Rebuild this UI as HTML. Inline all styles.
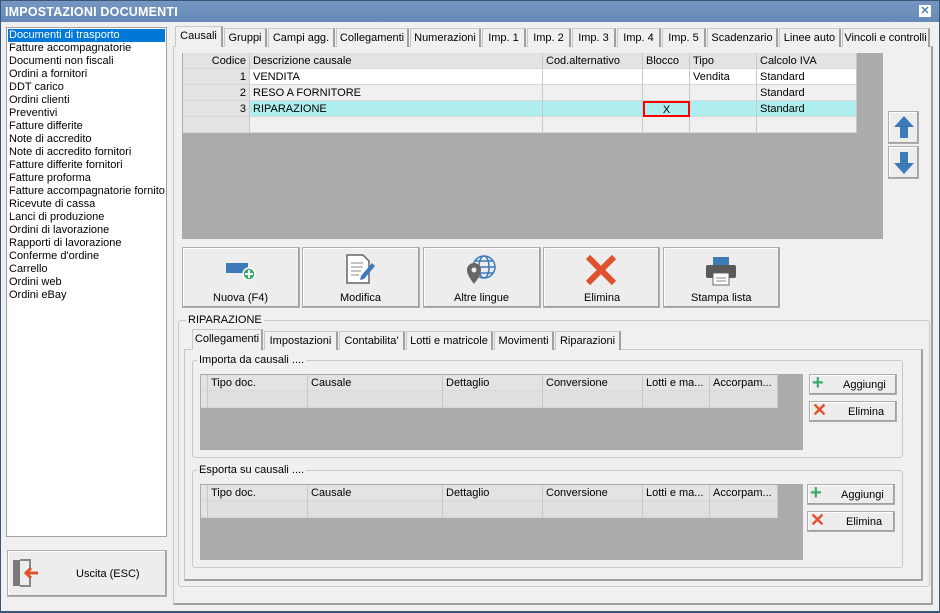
<!DOCTYPE html><html><head><meta charset="utf-8"><style>
*{box-sizing:border-box;margin:0;padding:0}
body{width:940px;height:613px;overflow:hidden;background:#f0f0f0;font:11px "Liberation Sans",sans-serif;color:#000;position:relative}
.a{position:absolute}
.t{position:absolute;white-space:nowrap}
.btn{position:absolute;background:#ededed;border:1px solid #adadad;box-shadow:inset -1px -1px 0 #a0a0a0,inset 1px 1px 0 #fff}
.tab{position:absolute;height:19px;border:1px solid #c8c8c8;border-bottom:none;border-right:2px solid #a0a0a0;background:#f0f0f0;padding:3px 0 0;text-align:center;font-size:11px}
.cell{position:absolute;border-right:1px solid #c8c8c8;border-bottom:1px solid #d8d8d8;padding:2px 3px;white-space:nowrap;overflow:hidden}
.grp{position:absolute;border:1px solid #c8c8c8;border-radius:3px}
.lbl{position:absolute;background:#f0f0f0;padding:0 2px;white-space:nowrap}
</style></head><body>
<!-- frame -->
<div class="a" style="left:0;top:0;width:940px;height:613px;border:1px solid #3b5675;border-bottom:2px solid #3b5675"></div>
<div class="a" style="left:1px;top:1px;width:938px;height:21px;background:linear-gradient(#7596c0,#6589b8)"></div>
<div class="t" style="left:5px;top:5px;color:#fff;font-weight:bold;font-size:12.5px;letter-spacing:0.2px">IMPOSTAZIONI DOCUMENTI</div>
<div class="a" style="left:919px;top:5px;width:12px;height:12px;background:#fff;color:#5a7eb0;font:bold 11px/12px 'Liberation Sans';text-align:center">✕</div>

<!-- left list -->
<div class="a" style="left:6px;top:27px;width:161px;height:510px;background:#fff;border:1px solid #a0a0a0"></div>
<div class="a" style="left:8px;top:29px;width:157px;height:13px;background:#0078d7"></div>
<div class="a" style="left:9px;top:29px;line-height:13px;font-size:11px">
<div style="color:#fff">Documenti di trasporto</div><div>Fatture accompagnatorie</div><div>Documenti non fiscali</div><div>Ordini a fornitori</div><div>DDT carico</div><div>Ordini clienti</div><div>Preventivi</div><div>Fatture differite</div><div>Note di accredito</div><div>Note di accredito fornitori</div><div>Fatture differite fornitori</div><div>Fatture proforma</div><div style="white-space:nowrap;width:156px;overflow:hidden">Fatture accompagnatorie fornito</div><div>Ricevute di cassa</div><div>Lanci di produzione</div><div>Ordini di lavorazione</div><div>Rapporti di lavorazione</div><div>Conferme d'ordine</div><div>Carrello</div><div>Ordini web</div><div>Ordini eBay</div></div>
<div class="btn" style="left:7px;top:550px;width:160px;height:47px"></div>
<svg class="a" style="left:10px;top:556px" width="30" height="34"><rect x="3" y="4" width="7" height="26" fill="#7a7a7a"/><path d="M10 4h10v8M20 22v8H10" stroke="#888" stroke-width="2" fill="none"/><path d="M28 17H16M21 12l-5 5 5 5" stroke="#e0502d" stroke-width="3" fill="none"/></svg>
<div class="t" style="left:76px;top:568px">Uscita (ESC)</div>

<!-- tabs -->
<div class="a" style="left:173px;top:46px;width:760px;height:559px;border:1px solid #c8c8c8;border-right:2px solid #a0a0a0;border-bottom:2px solid #a0a0a0"></div>
<div class="tab" style="left:175px;top:26px;width:48px;height:21px;background:#f0f0f0;z-index:2;border-bottom:none">Causali</div>
<div class="tab" style="left:224px;top:28px;width:43px">Gruppi</div>
<div class="tab" style="left:268px;top:28px;width:67px">Campi agg.</div>
<div class="tab" style="left:336px;top:28px;width:73px">Collegamenti</div>
<div class="tab" style="left:410px;top:28px;width:71px">Numerazioni</div>
<div class="tab" style="left:482px;top:28px;width:44px">Imp. 1</div>
<div class="tab" style="left:527px;top:28px;width:44px">Imp. 2</div>
<div class="tab" style="left:572px;top:28px;width:44px">Imp. 3</div>
<div class="tab" style="left:617px;top:28px;width:44px">Imp. 4</div>
<div class="tab" style="left:662px;top:28px;width:44px">Imp. 5</div>
<div class="tab" style="left:707px;top:28px;width:71px">Scadenzario</div>
<div class="tab" style="left:779px;top:28px;width:62px">Linee auto</div>
<div class="tab" style="left:842px;top:28px;width:88px">Vincoli e controlli</div>

<!-- main grid -->
<div class="a" style="left:182px;top:53px;width:701px;height:186px;background:#ababab"></div>
<div class="a" style="left:183px;top:53px;width:674px;height:80px;background:#fff"></div>
<div class="cell" style="left:183px;top:53px;width:67px;height:16px;background:#e3e3e3;text-align:right">Codice</div>
<div class="cell" style="left:250px;top:53px;width:293px;height:16px;background:#e3e3e3">Descrizione causale</div>
<div class="cell" style="left:543px;top:53px;width:100px;height:16px;background:#e3e3e3">Cod.alternativo</div>
<div class="cell" style="left:643px;top:53px;width:47px;height:16px;background:#e3e3e3">Blocco</div>
<div class="cell" style="left:690px;top:53px;width:67px;height:16px;background:#e3e3e3">Tipo</div>
<div class="cell" style="left:757px;top:53px;width:100px;height:16px;background:#e3e3e3">Calcolo IVA</div>

<div class="cell" style="left:183px;top:69px;width:67px;height:16px;background:#e3e3e3;text-align:right">1</div>
<div class="cell" style="left:250px;top:69px;width:293px;height:16px">VENDITA</div>
<div class="cell" style="left:543px;top:69px;width:100px;height:16px"></div>
<div class="cell" style="left:643px;top:69px;width:47px;height:16px"></div>
<div class="cell" style="left:690px;top:69px;width:67px;height:16px">Vendita</div>
<div class="cell" style="left:757px;top:69px;width:100px;height:16px">Standard</div>

<div class="cell" style="left:183px;top:85px;width:67px;height:16px;background:#e3e3e3;text-align:right">2</div>
<div class="cell" style="left:250px;top:85px;width:293px;height:16px;background:#f0f0f0">RESO A FORNITORE</div>
<div class="cell" style="left:543px;top:85px;width:100px;height:16px;background:#f0f0f0"></div>
<div class="cell" style="left:643px;top:85px;width:47px;height:16px;background:#f0f0f0"></div>
<div class="cell" style="left:690px;top:85px;width:67px;height:16px;background:#f0f0f0"></div>
<div class="cell" style="left:757px;top:85px;width:100px;height:16px;background:#f0f0f0">Standard</div>

<div class="cell" style="left:183px;top:101px;width:67px;height:16px;background:#e3e3e3;text-align:right">3</div>
<div class="cell" style="left:250px;top:101px;width:293px;height:16px;background:#afeeee">RIPARAZIONE</div>
<div class="cell" style="left:543px;top:101px;width:100px;height:16px;background:#afeeee"></div>
<div class="cell" style="left:643px;top:101px;width:47px;height:16px;background:#afeeee;border:2px solid #f00;text-align:center;padding:1px">X</div>
<div class="cell" style="left:690px;top:101px;width:67px;height:16px;background:#afeeee"></div>
<div class="cell" style="left:757px;top:101px;width:100px;height:16px;background:#afeeee">Standard</div>

<div class="cell" style="left:183px;top:117px;width:67px;height:16px;background:#e3e3e3"></div>
<div class="cell" style="left:250px;top:117px;width:293px;height:16px;background:#f0f0f0"></div>
<div class="cell" style="left:543px;top:117px;width:100px;height:16px;background:#f0f0f0"></div>
<div class="cell" style="left:643px;top:117px;width:47px;height:16px;background:#f0f0f0"></div>
<div class="cell" style="left:690px;top:117px;width:67px;height:16px;background:#f0f0f0"></div>
<div class="cell" style="left:757px;top:117px;width:100px;height:16px;background:#f0f0f0"></div>

<div class="btn" style="left:888px;top:111px;width:31px;height:33px"></div>
<svg class="a" style="left:892px;top:114px" width="24" height="26"><path d="M12 2L2 13h6v11h8V13h6z" fill="#3d7ab8"/></svg>
<div class="btn" style="left:888px;top:146px;width:31px;height:33px"></div>
<svg class="a" style="left:892px;top:150px" width="24" height="26"><path d="M12 24L2 13h6V2h8v11h6z" fill="#3d7ab8"/></svg>

<!-- action buttons -->
<div class="btn" style="left:182px;top:247px;width:118px;height:61px"></div>
<svg class="a" style="left:224px;top:257px" width="34" height="26"><rect x="2" y="6" width="22" height="10" fill="#3d7ab8"/><circle cx="25" cy="17" r="6" fill="#3daa6a" stroke="#fff" stroke-width="1.5"/><path d="M25 13v8M21 17h8" stroke="#fff" stroke-width="2"/></svg>
<div class="t" style="left:213px;top:292px">Nuova (F4)</div>
<div class="btn" style="left:302px;top:247px;width:118px;height:61px"></div>
<svg class="a" style="left:344px;top:253px" width="34" height="32"><path d="M3 2h16l6 6v22H3z" fill="#fff" stroke="#666" stroke-width="1.5"/><path d="M7 10h12M7 14h12M7 18h10M7 22h8" stroke="#888"/><path d="M17 23l11-13 3 3-11 13-4 1z" fill="#3d7ab8"/></svg>
<div class="t" style="left:340px;top:292px">Modifica</div>
<div class="btn" style="left:423px;top:247px;width:118px;height:61px"></div>
<svg class="a" style="left:465px;top:253px" width="34" height="34"><circle cx="19" cy="14" r="11" fill="none" stroke="#3d7ab8" stroke-width="1.5"/><ellipse cx="19" cy="14" rx="5" ry="11" fill="none" stroke="#3d7ab8" stroke-width="1.5"/><path d="M8 14h22M10 8h18M10 20h18" stroke="#3d7ab8" stroke-width="1.5"/><path d="M9 31C3 23 2 20 2 17a7 7 0 0114 0c0 3-1 6-7 14z" fill="#666"/><circle cx="9" cy="17" r="2.5" fill="#eee"/></svg>
<div class="t" style="left:454px;top:292px">Altre lingue</div>
<div class="btn" style="left:543px;top:247px;width:117px;height:61px"></div>
<svg class="a" style="left:585px;top:254px" width="32" height="32"><path d="M3 3l26 26M29 3L3 29" stroke="#e0502d" stroke-width="6"/></svg>
<div class="t" style="left:584px;top:292px">Elimina</div>
<div class="btn" style="left:663px;top:247px;width:117px;height:61px"></div>
<svg class="a" style="left:705px;top:256px" width="32" height="30"><rect x="8" y="1" width="16" height="8" fill="#3d7ab8"/><rect x="1" y="9" width="30" height="13" rx="2" fill="#5a5a5a"/><rect x="8" y="17" width="16" height="12" fill="#fff" stroke="#666"/><path d="M11 22h10M11 25h10" stroke="#888"/></svg>
<div class="t" style="left:691px;top:292px">Stampa lista</div>

<!-- RIPARAZIONE group -->
<div class="grp" style="left:178px;top:320px;width:752px;height:267px"></div>
<div class="lbl" style="left:186px;top:314px">RIPARAZIONE</div>
<div class="a" style="left:184px;top:349px;width:739px;height:232px;border:1px solid #c8c8c8;border-right:2px solid #a0a0a0;border-bottom:2px solid #a0a0a0"></div>
<div class="tab" style="left:192px;top:329px;width:71px;height:21px;z-index:2">Collegamenti</div>
<div class="tab" style="left:264px;top:331px;width:74px">Impostazioni</div>
<div class="tab" style="left:339px;top:331px;width:66px">Contabilita'</div>
<div class="tab" style="left:406px;top:331px;width:87px">Lotti e matricole</div>
<div class="tab" style="left:494px;top:331px;width:60px">Movimenti</div>
<div class="tab" style="left:555px;top:331px;width:66px">Riparazioni</div>

<!-- group 1 -->
<div class="grp" style="left:192px;top:360px;width:711px;height:98px"></div>
<div class="lbl" style="left:197px;top:354px">Importa da causali ....</div>
<div class="a" style="left:200px;top:374px;width:603px;height:76px;background:#ababab"></div>
<div class="cell" style="left:201px;top:375px;width:7px;height:16px;background:#e3e3e3"></div>
<div class="cell" style="left:208px;top:375px;width:100px;height:16px;background:#e3e3e3">Tipo doc.</div>
<div class="cell" style="left:308px;top:375px;width:135px;height:16px;background:#e3e3e3">Causale</div>
<div class="cell" style="left:443px;top:375px;width:100px;height:16px;background:#e3e3e3">Dettaglio</div>
<div class="cell" style="left:543px;top:375px;width:100px;height:16px;background:#e3e3e3">Conversione</div>
<div class="cell" style="left:643px;top:375px;width:67px;height:16px;background:#e3e3e3">Lotti e ma...</div>
<div class="cell" style="left:710px;top:375px;width:68px;height:16px;background:#e3e3e3">Accorpam...</div>
<div class="cell" style="left:201px;top:391px;width:7px;height:17px;background:#e3e3e3"></div>
<div class="cell" style="left:208px;top:391px;width:100px;height:17px;background:#e0e0e0"></div>
<div class="cell" style="left:308px;top:391px;width:135px;height:17px;background:#e0e0e0"></div>
<div class="cell" style="left:443px;top:391px;width:100px;height:17px;background:#e0e0e0"></div>
<div class="cell" style="left:543px;top:391px;width:100px;height:17px;background:#e0e0e0"></div>
<div class="cell" style="left:643px;top:391px;width:67px;height:17px;background:#e0e0e0"></div>
<div class="cell" style="left:710px;top:391px;width:68px;height:17px;background:#e0e0e0"></div>
<div class="btn" style="left:809px;top:374px;width:88px;height:21px"></div>
<div class="t" style="left:812px;top:374px;color:#3daa6a;font:bold 20px/18px 'Liberation Sans'">+</div>
<div class="t" style="left:843px;top:379px">Aggiungi</div>
<div class="btn" style="left:809px;top:401px;width:88px;height:21px"></div>
<div class="t" style="left:812px;top:401px;color:#e0502d;font:bold 18px/18px 'Liberation Sans'">✕</div>
<div class="t" style="left:848px;top:406px">Elimina</div>

<!-- group 2 -->
<div class="grp" style="left:192px;top:470px;width:711px;height:98px"></div>
<div class="lbl" style="left:197px;top:464px">Esporta su causali ....</div>
<div class="a" style="left:200px;top:484px;width:603px;height:76px;background:#ababab"></div>
<div class="cell" style="left:201px;top:485px;width:7px;height:16px;background:#e3e3e3"></div>
<div class="cell" style="left:208px;top:485px;width:100px;height:16px;background:#e3e3e3">Tipo doc.</div>
<div class="cell" style="left:308px;top:485px;width:135px;height:16px;background:#e3e3e3">Causale</div>
<div class="cell" style="left:443px;top:485px;width:100px;height:16px;background:#e3e3e3">Dettaglio</div>
<div class="cell" style="left:543px;top:485px;width:100px;height:16px;background:#e3e3e3">Conversione</div>
<div class="cell" style="left:643px;top:485px;width:67px;height:16px;background:#e3e3e3">Lotti e ma...</div>
<div class="cell" style="left:710px;top:485px;width:68px;height:16px;background:#e3e3e3">Accorpam...</div>
<div class="cell" style="left:201px;top:501px;width:7px;height:17px;background:#e3e3e3"></div>
<div class="cell" style="left:208px;top:501px;width:100px;height:17px;background:#e0e0e0"></div>
<div class="cell" style="left:308px;top:501px;width:135px;height:17px;background:#e0e0e0"></div>
<div class="cell" style="left:443px;top:501px;width:100px;height:17px;background:#e0e0e0"></div>
<div class="cell" style="left:543px;top:501px;width:100px;height:17px;background:#e0e0e0"></div>
<div class="cell" style="left:643px;top:501px;width:67px;height:17px;background:#e0e0e0"></div>
<div class="cell" style="left:710px;top:501px;width:68px;height:17px;background:#e0e0e0"></div>
<div class="btn" style="left:807px;top:484px;width:88px;height:21px"></div>
<div class="t" style="left:810px;top:484px;color:#3daa6a;font:bold 20px/18px 'Liberation Sans'">+</div>
<div class="t" style="left:841px;top:489px">Aggiungi</div>
<div class="btn" style="left:807px;top:511px;width:88px;height:21px"></div>
<div class="t" style="left:810px;top:511px;color:#e0502d;font:bold 18px/18px 'Liberation Sans'">✕</div>
<div class="t" style="left:846px;top:516px">Elimina</div>
</body></html>
